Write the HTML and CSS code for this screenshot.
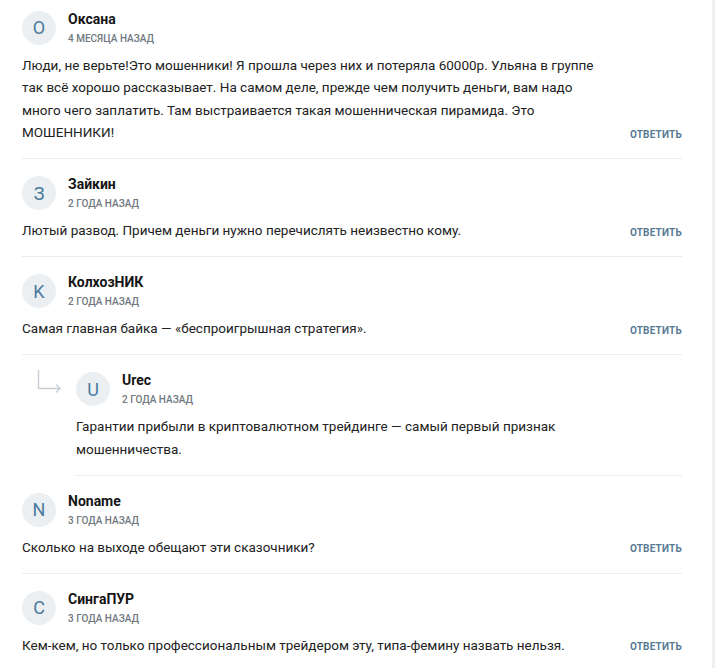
FILE: index.html
```html
<!DOCTYPE html>
<html lang="ru">
<head>
<meta charset="utf-8">
<link rel="stylesheet" href="styles.css">
</head>
<body>
<div class="page">
  <div class="comments">
    <div class="comment first">
      <div class="head">
        <div class="avatar">O</div>
        <div class="meta"><div class="name">Оксана</div><div class="date">4 месяца назад</div></div>
      </div>
      <div class="body">
        <p class="text">Люди, не верьте!Это мошенники! Я прошла через них и потеряла 60000р. Ульяна в группе так всё хорошо рассказывает. На самом деле, прежде чем получить деньги, вам надо много чего заплатить. Там выстраивается такая мошенническая пирамида. Это МОШЕННИКИ!</p>
        <div class="reply">Ответить</div>
      </div>
    </div>
    <div class="comment">
      <div class="head">
        <div class="avatar">З</div>
        <div class="meta"><div class="name">Зайкин</div><div class="date">2 года назад</div></div>
      </div>
      <div class="body">
        <p class="text">Лютый развод. Причем деньги нужно перечислять неизвестно кому.</p>
        <div class="reply">Ответить</div>
      </div>
    </div>
    <div class="comment">
      <div class="head">
        <div class="avatar">K</div>
        <div class="meta"><div class="name">КолхозНИК</div><div class="date">2 года назад</div></div>
      </div>
      <div class="body">
        <p class="text">Самая главная байка — «беспроигрышная стратегия».</p>
        <div class="reply">Ответить</div>
      </div>
    </div>
    <div class="thread">
      <div class="arrow">
        <svg width="26" height="26" viewBox="0 0 26 26" fill="none" stroke="#c8ced4" stroke-width="1.4" stroke-linecap="round" stroke-linejoin="round">
          <path d="M1.5 1.5 V19.5 H23"/>
          <path d="M19.5 16 L23 19.5 L19.5 23"/>
        </svg>
      </div>
      <div class="comment nested">
        <div class="head">
          <div class="avatar">U</div>
          <div class="meta"><div class="name">Urec</div><div class="date">2 года назад</div></div>
        </div>
        <div class="body">
          <p class="text">Гарантии прибыли в криптовалютном трейдинге — самый первый признак мошенничества.</p>
          <div class="reply"></div>
        </div>
      </div>
    </div>
    <div class="comment">
      <div class="head">
        <div class="avatar">N</div>
        <div class="meta"><div class="name">Noname</div><div class="date">3 года назад</div></div>
      </div>
      <div class="body">
        <p class="text">Сколько на выходе обещают эти сказочники?</p>
        <div class="reply">Ответить</div>
      </div>
    </div>
    <div class="comment">
      <div class="head">
        <div class="avatar">C</div>
        <div class="meta"><div class="name">СингаПУР</div><div class="date">3 года назад</div></div>
      </div>
      <div class="body">
        <p class="text">Кем-кем, но только профессиональным трейдером эту, типа-фемину назвать нельзя.</p>
        <div class="reply">Ответить</div>
      </div>
    </div>
  </div>
</div>
</body>
</html>
```
FILE: styles.css
```css
html, body {
  margin: 0;
  padding: 0;
}
body {
  background: #eef1f4;
  font-family: Roboto, "Noto Sans", Arial, sans-serif;
  color: #222;
}
.page {
  width: 712px;
  height: 668px;
  overflow: hidden;
  background: #fff;
  box-sizing: border-box;
  padding: 0 30px 0 22px;
}
.comment {
  padding: 17px 0 14.5px;
  border-bottom: 1px solid #ececec;
}
.comment.first {
  padding-top: 10.5px;
}
.head {
  display: flex;
  align-items: center;
  gap: 12px;
}
.avatar {
  width: 34px;
  height: 34px;
  border-radius: 50%;
  background: #eceff2;
  color: #4a7b9d;
  font-size: 18px;
  display: flex;
  align-items: center;
  justify-content: center;
  flex: none;
}
.meta {
  display: flex;
  flex-direction: column;
  gap: 6px;
}
.name {
  font-size: 14px;
  line-height: 16px;
  font-weight: 700;
  color: #151515;
}
.date {
  font-size: 10px;
  line-height: 12px;
  font-weight: 500;
  text-transform: uppercase;
  color: #707880;
}
.body {
  display: flex;
  align-items: flex-end;
  gap: 20px;
  margin-top: 9px;
}
.text {
  flex: 1;
  margin: 0;
  font-size: 13.5px;
  line-height: 22.5px;
  color: #222;
}
.reply {
  width: 60px;
  flex: none;
  text-align: right;
  font-size: 10px;
  line-height: 12px;
  font-weight: 700;
  text-transform: uppercase;
  color: #577a94;
  letter-spacing: 0.2px;
  margin-bottom: 3px;
}
.thread {
  display: flex;
}
.arrow {
  width: 54px;
  flex: none;
  padding: 14px 0 0 15px;
  box-sizing: border-box;
}
.nested {
  flex: 1;
}
```
